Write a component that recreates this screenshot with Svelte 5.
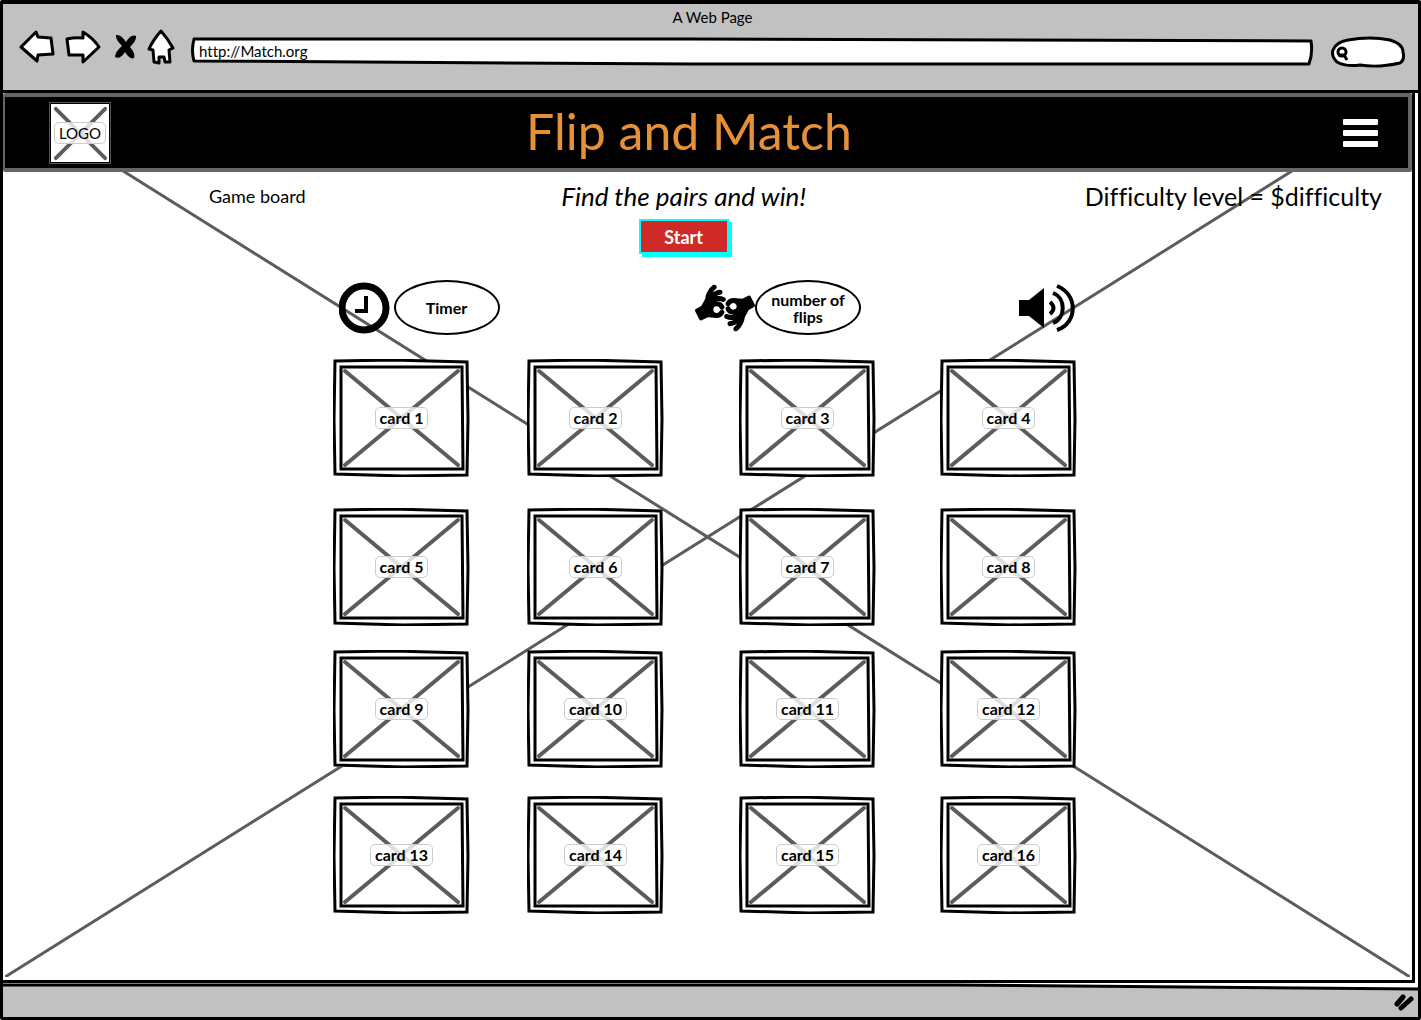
<script>
  const cards = Array.from({ length: 16 }, (_, i) => `card ${i + 1}`);
  let url = $state('http://Match.org');
  let query = $state('');
</script>

<div class="window">
  <header class="chrome">
    <div class="page-title">A Web Page</div>
    <div class="toolbar">
      <button class="nav" aria-label="Back">
        <svg width="36" height="34" viewBox="0 0 36 34"><path d="M2 17 L17 2 L19 7 L32 8 L34 24 L19 25 L18 31 Z" /></svg>
      </button>
      <button class="nav" aria-label="Forward">
        <svg width="36" height="34" viewBox="0 0 36 34"><path d="M2 9 Q10 7 18 8 L18 2 Q28 8 34 17 L18 32 L18 25 L4 25 Z" /></svg>
      </button>
      <button class="nav stop" aria-label="Stop">
        <svg width="22" height="28" viewBox="0 0 22 28"><path class="blade" d="M1 2 Q6 1 11 9 Q16 1 21 3 Q22 7 15 14 Q21 21 19 25 Q15 27 10 19 Q5 27 0 24 Q0 19 7 13 Q0 6 1 2 Z" /></svg>
      </button>
      <button class="nav" aria-label="Home">
        <svg width="28" height="36" viewBox="0 0 28 36"><path d="M14 2 Q21 10 26 19 L22 21 L23 33 L18 33 L17 28 L12 28 L12 34 L7 33 L6 21 L2 20 Q6 11 14 2 Z" /></svg>
      </button>
      <div class="address">
        <svg class="outline" viewBox="0 0 1120 30" preserveAspectRatio="none"><path d="M3 2 L500 2 L1117 4 Q1119 16 1115 27 L500 27 L3 24 Q0 14 3 2 Z" /></svg>
        <input type="text" aria-label="Address" bind:value={url} />
      </div>
      <div class="search">
        <svg class="outline" viewBox="0 0 76 32" preserveAspectRatio="none"><path d="M18 4 Q40 0 60 4 Q73 8 73 16 Q75 24 70 27 Q48 32 30 29 Q16 31 7 26 Q1 20 3 14 Q6 6 18 4 Z" /></svg>
        <svg class="lens" width="14" height="16" viewBox="0 0 14 16"><circle cx="7" cy="6" r="4" /><path d="M9 9 L12 14 M3 9 L9 9" /></svg>
        <input type="text" aria-label="Search" bind:value={query} />
      </div>
    </div>
  </header>

  <div class="viewport">
    <svg class="backdrop" viewBox="0 0 100 100" preserveAspectRatio="none">
      <path d="M0 0 L100 100 M100 0 L0 100" />
    </svg>

    <div class="banner">
      <div class="logo">
        <svg viewBox="0 0 60 60"><path d="M5 5 L56 56 M56 5 L5 56" /></svg>
        <span class="tag">LOGO</span>
      </div>
      <h1>Flip and Match</h1>
      <button class="menu" aria-label="Menu"><span></span><span></span><span></span></button>
    </div>

    <main>
      <div class="info">
        <p class="board-name">Game board</p>
        <div class="lead">
          <p class="slogan">Find the pairs and win!</p>
          <button class="start">Start</button>
        </div>
        <p class="difficulty">Difficulty level = $difficulty</p>
      </div>

      <div class="status">
        <div class="stat">
          <svg width="52" height="54" viewBox="0 0 52 54"><circle cx="25" cy="27" r="22" fill="none" stroke="#000" stroke-width="7" /><path d="M27 15 V30 H16" fill="none" stroke="#000" stroke-width="4" /></svg>
          <div class="bubble">Timer</div>
        </div>
        <div class="stat">
          <svg width="60" height="48" viewBox="0 0 640 512"><path d="M290.547 189.039c-20.295-10.149-44.147-11.199-64.739-3.89 42.606 0 71.208 20.475 85.578 50.576 8.576 17.899-5.148 38.071-23.617 38.071 18.429 0 32.211 20.136 23.632 38.071-14.725 30.46-46.151 50.854-80.298 50.854-.557 0-94.471-8.615-94.471-8.615l-66.406 33.347c-9.384 4.693-19.815.379-23.895-7.781L1.86 290.747c-4.167-8.615-1.111-18.897 6.946-23.621l58.072-33.069L108 159.861c6.39-57.245 34.731-109.767 79.743-146.726 11.391-9.448 28.341-7.781 37.51 3.613 9.446 11.394 7.78 28.067-3.612 37.516-12.503 10.559-23.618 22.509-32.509 35.57 21.672-14.729 46.679-24.732 74.186-28.067 14.725-1.945 28.063 8.336 29.73 23.065 1.945 14.728-8.336 28.067-23.062 29.734-16.116 1.945-31.12 7.503-44.178 15.284 26.114-5.713 58.712-3.138 88.079 11.115 13.336 6.669 18.893 22.509 12.224 35.848-6.389 13.06-22.504 18.617-35.565 12.226zm-27.229 69.472c-6.112-12.505-18.338-20.286-32.231-20.286a35.46 35.46 0 0 0-35.565 35.57c0 21.428 17.808 35.57 35.565 35.57 13.893 0 26.119-7.781 32.231-20.286 4.446-9.449 13.614-15.006 23.339-15.284-9.725-.277-18.893-5.835-23.339-15.284zm374.821-37.237c4.168 8.615 1.111 18.897-6.946 23.621l-58.071 33.069L532 352.16c-6.39 57.245-34.731 109.767-79.743 146.726-10.932 9.112-27.799 8.144-37.51-3.613-9.446-11.394-7.78-28.067 3.613-37.516 12.503-10.559 23.617-22.509 32.508-35.57-21.672 14.729-46.679 24.732-74.186 28.067-10.021 2.506-27.552-5.643-29.73-23.065-1.945-14.728 8.336-28.067 23.062-29.734 16.116-1.946 31.12-7.503 44.178-15.284-26.114 5.713-58.712 3.138-88.079-11.115-13.336-6.669-18.893-22.509-12.224-35.848 6.389-13.061 22.505-18.619 35.565-12.227 20.295 10.149 44.147 11.199 64.739 3.89-42.606 0-71.208-20.475-85.578-50.576-8.576-17.899 5.148-38.071 23.617-38.071-18.429 0-32.211-20.136-23.632-38.071 14.033-29.396 44.039-50.887 81.966-50.854l92.803 8.615 66.406-33.347c9.408-4.704 19.828-.354 23.894 7.781l44.455 88.926zm-229.227-18.618c-13.893 0-26.119 7.781-32.231 20.286-4.446 9.449-13.614 15.006-23.339 15.284 9.725.278 18.893 5.836 23.339 15.284 6.112 12.505 18.338 20.286 32.231 20.286a35.46 35.46 0 0 0 35.565-35.57c0-21.429-17.808-35.57-35.565-35.57z" /></svg>
          <div class="bubble">number of<br />flips</div>
        </div>
        <button class="sound" aria-label="Sound">
          <svg width="58" height="50" viewBox="0 0 58 50"><path d="M0 17 H10 L25 5 V45 L10 33 H0 Z" /><path class="wave" d="M31 19 Q38 25 31 31 M34 10 C47 15 47 35 34 40 M38 3 C59 11 59 40 38 47" /></svg>
        </button>
      </div>

      <div class="cards">
        {#each cards as name}
          <button class="card">
            <svg viewBox="0 0 137 118" preserveAspectRatio="none">
              <path class="paper" d="M1 1 H135 V117 H1 Z" />
              <path class="outer" d="M2 2 L60 1 L134 3 L135 60 L134 116 L70 117 L2 115 L1 60 Z" />
              <path class="inner" d="M8 8 L129 8 L130 110 L8 110 Z" />
              <path class="cross" d="M12 12 L125 106 M125 12 L12 106" />
            </svg>
            <span class="tag">{name}</span>
          </button>
        {/each}
      </div>
    </main>
  </div>

  <footer>
    <svg class="lip" viewBox="0 0 1415 10" preserveAspectRatio="none"><path class="gap" d="M0 0 L1415 0 L1415 6 L950 2 L0 2 Z" /><path d="M0 2 L950 2 L1415 6" /></svg>
    <svg class="grip" width="20" height="18" viewBox="0 0 20 18"><path d="M3 11 L9 4 M7 15 L17 6" /></svg>
  </footer>
</div>

<style>
  :global(body) {
    background: #fff;
  }

  .window {
    box-sizing: border-box;
    min-height: 100vh;
    display: flex;
    flex-direction: column;
    border: 3px solid #000;
    border-top-width: 4px;
    border-radius: 2px;
    background: #fff;
    color: #000;
    font-family: Lato, 'Open Sans', sans-serif;
    font-size: 16px;
    font-variant-ligatures: none;
    line-height: 20px;
  }

  button,
  input {
    font: inherit;
    color: inherit;
    border: 0;
    padding: 0;
    margin: 0;
    background: none;
  }

  button {
    cursor: pointer;
  }

  svg {
    display: block;
  }

  h1,
  p {
    margin: 0;
  }

  .chrome {
    background: #c1c1c1;
    border-bottom: 3px solid #000;
    padding: 3px 12px 23px 16px;
  }

  .page-title {
    text-align: center;
    font-size: 15px;
  }

  .toolbar {
    display: flex;
    align-items: center;
    height: 40px;
    gap: 10px;
  }

  .nav path {
    fill: #fff;
    stroke: #000;
    stroke-width: 3;
    stroke-linejoin: round;
  }

  .nav .blade {
    fill: #000;
    stroke-width: 0;
  }

  .stop {
    margin-left: 4px;
  }

  .address {
    position: relative;
    flex: 1;
    height: 30px;
    display: flex;
    margin: 10px 6px 0;
  }

  .search {
    position: relative;
    width: 76px;
    height: 32px;
    display: flex;
    align-items: center;
    padding: 4px 0 0 5px;
    margin-top: 10px;
    box-sizing: border-box;
  }

  .outline {
    position: absolute;
    inset: 0;
    width: 100%;
    height: 100%;
  }

  .outline path {
    fill: #fff;
    stroke: #000;
    stroke-width: 3;
    stroke-linejoin: round;
  }

  .lens {
    position: relative;
    flex: none;
  }

  .lens * {
    fill: none;
    stroke: #000;
    stroke-width: 3;
  }

  .address input,
  .search input {
    position: relative;
    flex: 1;
    min-width: 0;
    outline: none;
    font-size: 15px;
  }

  .address input {
    padding: 0 8px 2px;
  }

  .viewport {
    position: relative;
    flex: 1;
    display: flex;
    flex-direction: column;
    margin-right: 3px;
    border-right: 3px solid #000;
    border-bottom: 3px solid #000;
  }

  .backdrop {
    position: absolute;
    inset: 4px 2px 3px;
    width: calc(100% - 4px);
    height: calc(100% - 7px);
  }

  .backdrop path {
    fill: none;
    stroke: #5c5c5c;
    stroke-width: 3;
    stroke-linecap: round;
    vector-effect: non-scaling-stroke;
  }

  .banner {
    position: relative;
    display: grid;
    grid-template-columns: 478fr 815fr auto;
    align-items: center;
    height: 71px;
    padding: 0 30px 0 42px;
    border: 4px solid #666;
    border-left-width: 2px;
    border-radius: 2px;
    background: #000;
  }

  .logo {
    display: grid;
    place-items: center;
    width: 58px;
    height: 58px;
    margin-left: 4px;
    background: #fff;
    outline: 1px solid #000;
    box-shadow: 0 0 0 2px #555;
  }

  .logo > *,
  .card > * {
    grid-area: 1 / 1;
  }

  .logo svg {
    width: 58px;
    height: 58px;
  }

  .logo path,
  .cross {
    fill: none;
    stroke: #5c5c5c;
    stroke-width: 4;
    stroke-linecap: round;
  }

  .tag {
    position: relative;
    padding: 0 4px;
    border: 1px solid #ccc;
    border-radius: 5px;
    background: rgba(255, 255, 255, 0.8);
    line-height: 20px;
  }

  .logo .tag {
    font-size: 15px;
  }

  h1 {
    color: #e69138;
    font-size: 50px;
    line-height: 56px;
    font-weight: 400;
    padding-bottom: 4px;
    white-space: nowrap;
  }

  .menu {
    display: grid;
    gap: 5px;
    width: 35px;
  }

  .menu span {
    height: 6px;
    border-radius: 1px;
    background: #fff;
  }

  main {
    position: relative;
    padding-bottom: 64px;
  }

  .info {
    display: grid;
    grid-template-columns: 350fr 520fr auto;
    padding: 8px 30px 0 206px;
    line-height: 32px;
  }

  .board-name {
    font-size: 18px;
  }

  .lead {
    justify-self: start;
    display: flex;
    flex-direction: column;
    align-items: center;
  }

  .slogan {
    font-size: 26px;
    font-style: italic;
  }

  .difficulty {
    font-size: 25px;
  }

  .start {
    margin-top: 9px;
    width: 86px;
    height: 31px;
    background: #cf2a27;
    color: #fff;
    font-size: 18px;
    line-height: 30px;
    font-weight: 700;
    box-shadow: 0 0 0 2px #0ff, 3px 3px 0 2px #0ff;
  }

  .status {
    display: grid;
    grid-template-columns: 357fr 324fr 57fr;
    align-items: center;
    width: 738px;
    max-width: 100%;
    margin: 28px auto 0;
  }

  .stat {
    display: flex;
    align-items: center;
    gap: 3px;
  }

  .stat + .stat {
    gap: 0;
  }

  .bubble {
    display: grid;
    place-items: center;
    box-sizing: border-box;
    width: 106px;
    height: 55px;
    border: 2px solid #000;
    border-radius: 50%;
    background: #fff;
    font-size: 16px;
    font-weight: 700;
    line-height: 17px;
    text-align: center;
  }

  .wave {
    fill: none;
    stroke: #000;
    stroke-width: 4;
  }

  .cards {
    display: grid;
    grid-template-columns: 194fr 212fr 201fr 137fr;
    grid-template-rows: 149px 142px 146px 118px;
    width: 744px;
    max-width: 100%;
    margin: 24px auto 0;
    padding-right: 5px;
  }

  .card {
    display: grid;
    place-items: center;
    width: 137px;
    height: 118px;
    font-size: 16px;
    font-weight: 700;
  }

  .card svg {
    width: 100%;
    height: 100%;
  }

  .paper {
    fill: #fff;
  }

  .outer,
  .inner {
    fill: none;
    stroke: #000;
    stroke-width: 3;
  }

  footer {
    position: relative;
    display: flex;
    align-items: center;
    justify-content: flex-end;
    height: 34px;
    padding-right: 4px;
    background: #c1c1c1;
  }

  .lip {
    position: absolute;
    top: 0;
    left: 0;
    width: 100%;
    height: 10px;
  }

  .lip path {
    fill: none;
    stroke: #000;
    stroke-width: 3;
  }

  .lip .gap {
    fill: #fff;
    stroke: none;
  }

  .grip {
    margin-top: 4px;
  }

  .grip path {
    fill: none;
    stroke: #000;
    stroke-width: 5;
    stroke-linecap: round;
  }
</style>
